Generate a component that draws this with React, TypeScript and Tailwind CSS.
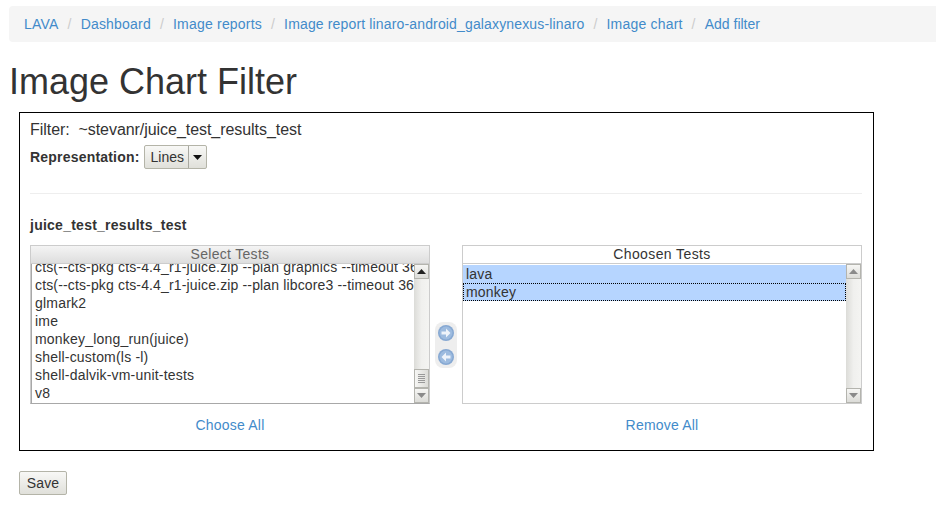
import React from 'react';

const crumbs = [
  { label: 'LAVA', cls: '' },
  { label: 'Dashboard', cls: '' },
  { label: 'Image reports', cls: '' },
  { label: 'Image report linaro-android_galaxynexus-linaro', cls: 'tracking-[0.15px]' },
  { label: 'Image chart', cls: '' },
  { label: 'Add filter', cls: 'tracking-normal' },
];

const available = [
  { label: 'cts(--cts-pkg cts-4.4_r1-juice.zip --plan graphics --timeout 3600)', cls: 'tracking-[0.15px]' },
  { label: 'cts(--cts-pkg cts-4.4_r1-juice.zip --plan libcore3 --timeout 3600)', cls: 'tracking-[0.15px]' },
  { label: 'glmark2', cls: '' },
  { label: 'ime', cls: '' },
  { label: 'monkey_long_run(juice)', cls: '' },
  { label: 'shell-custom(ls -l)', cls: '' },
  { label: 'shell-dalvik-vm-unit-tests', cls: '' },
  { label: 'v8', cls: '' },
];

const ScrollButton = ({ dir, dark }: { dir: 'up' | 'down'; dark?: boolean }) => (
  <div className="w-[15px] h-[15px] shrink-0 flex items-center justify-center bg-gradient-to-b from-[#f6f6f4] to-[#dcdcd8] border border-[#b4b4ae]">
    <svg width="9" height="5" viewBox="0 0 9 5">
      <path d={dir === 'up' ? 'M4.5 0 L9 5 L0 5 Z' : 'M0 0 L9 0 L4.5 5 Z'} fill={dark ? '#222' : '#8a8a8a'} />
    </svg>
  </div>
);

const Track = ({ children }: { children: React.ReactNode }) => (
  <div className="w-[15px] shrink-0 flex flex-col bg-gradient-to-r from-[#dcdcd8] via-[#f0f0ee] to-[#f4f4f2]">
    {children}
  </div>
);

const MoveButton = ({ dir }: { dir: 'left' | 'right' }) => (
  <svg width="16" height="16" viewBox="0 0 16 16" className="block">
    <circle cx="8" cy="8" r="8" fill="#86a8d2" />
    <circle cx="8" cy="8" r="6.5" fill="#9dbbdf" />
    <path
      d={dir === 'right' ? 'M3.5 6.5 H8 V3.5 L12.5 8 L8 12.5 V9.5 H3.5 Z' : 'M12.5 6.5 H8 V3.5 L3.5 8 L8 12.5 V9.5 H12.5 Z'}
      fill="#eef3fa"
    />
  </svg>
);

export default function App() {
  return (
    <div className="w-[936px] h-[514px] overflow-hidden bg-white text-[#333] text-[14px] leading-[20px] tracking-[0.2px] font-['Liberation_Sans',Arial,sans-serif]">
      {/* Breadcrumb */}
      <div className="pl-[9px] pt-[6px]">
        <ul className="h-[36px] flex items-center pl-[15px] bg-[#f5f5f5] rounded-l-[4px] whitespace-nowrap">
          {crumbs.map((c, i) => (
            <li key={c.label} className="flex">
              {i > 0 && <span className="text-[#ccc] px-[9px]">/</span>}
              <a className={`text-[#428bca] ${c.cls}`}>{c.label}</a>
            </li>
          ))}
        </ul>
      </div>

      <h1 className="pl-[9px] mt-[20px] text-[36px] leading-[40px] font-normal tracking-normal">Image Chart Filter</h1>

      {/* Filter box */}
      <div className="ml-[19px] mt-[10px] w-[855px] h-[339px] border border-black pl-[10px] pr-[11px]">
        <div className="mt-[7px] whitespace-pre text-[16px] tracking-[-0.05px]">Filter:  ~stevanr/juice_test_results_test</div>
        <div className="mt-[5px] flex items-center gap-[4px]">
          <span className="font-bold">Representation:</span>
          <div className="h-[24px] flex items-center border border-[#b4b4a8] rounded-[2px] bg-gradient-to-b from-[#f8f8f6] to-[#e0e0da]">
            <span className="pl-[6px] pr-[4px] tracking-normal">Lines</span>
            <span className="h-[22px] w-[18px] border-l border-[#a8a8a0] flex items-center justify-center">
              <svg width="9" height="5" viewBox="0 0 9 5">
                <path d="M0 0 L9 0 L4.5 5 Z" fill="#111" />
              </svg>
            </span>
          </div>
        </div>

        <div className="mt-[24px] border-t border-[#eee]" />
        <h4 className="mt-[21px] font-bold tracking-[0.25px]">juice_test_results_test</h4>

        <div className="mt-[10px] flex items-stretch">
          {/* Available */}
          <div className="w-[400px]">
            <div className="h-[159px] flex flex-col border border-[#ccc] border-b-[#a8a8a8]">
              <div className="h-[18px] shrink-0 text-center leading-[17px] tracking-[0.3px] text-[#666] bg-gradient-to-b from-[#f4f4f4] to-[#dedede] border-b border-[#ccc]">
                Select Tests
              </div>
              <div className="flex-1 min-h-0 flex border-l border-[#a8a8a8]">
                <div className="flex-1 min-w-0 overflow-hidden pl-[3px] pt-[3px] whitespace-nowrap">
                  <div className="-mt-[9px]">
                    {available.map((t) => (
                      <div key={t.label} className={`h-[18px] leading-[18px] ${t.cls}`}>{t.label}</div>
                    ))}
                  </div>
                </div>
                <Track>
                  <ScrollButton dir="up" dark />
                  <div className="flex-1" />
                  <div className="h-[19px] shrink-0 flex flex-col items-center justify-center gap-[1px] bg-gradient-to-r from-[#f6f6f4] to-[#dcdcd8] border border-[#b4b4ae]">
                    {[0, 1, 2, 3, 4].map((n) => (
                      <div key={n} className="w-[7px] h-px bg-[#999]" />
                    ))}
                  </div>
                  <ScrollButton dir="down" />
                </Track>
              </div>
            </div>
            <div className="mt-[11px] text-center text-[#428bca]">Choose All</div>
          </div>

          {/* Move buttons */}
          <div className="w-[32px] h-[159px] flex justify-center">
            <div className="self-start mt-[77px] w-[22px] h-[46px] rounded-[8px] bg-[#eeeeee] flex flex-col items-center justify-center gap-[8px]">
              <MoveButton dir="right" />
              <MoveButton dir="left" />
            </div>
          </div>

          {/* Chosen */}
          <div className="w-[400px]">
            <div className="h-[159px] flex flex-col border border-[#ccc]">
              <div className="h-[18px] shrink-0 text-center leading-[17px] tracking-[0.4px] border-b border-[#ccc]">Choosen Tests</div>
              <div className="flex-1 min-h-0 flex">
                <div className="flex-1 min-w-0 pt-[1px]">
                  <div className="h-[18px] leading-[18px] pl-[3px] bg-[#b6d5ff]">lava</div>
                  <div className="h-[18px] leading-[16px] pl-[2px] bg-[#b6d5ff] border border-dotted border-black">monkey</div>
                </div>
                <Track>
                  <ScrollButton dir="up" />
                  <div className="flex-1" />
                  <ScrollButton dir="down" />
                </Track>
              </div>
            </div>
            <div className="mt-[11px] text-center text-[#428bca]">Remove All</div>
          </div>
        </div>
      </div>

      <button className="block ml-[19px] mt-[20px] w-[48px] h-[24px] border border-[#b4b4a8] rounded-[2px] bg-gradient-to-b from-[#f8f8f6] to-[#e0e0da] text-[#333]">
        Save
      </button>
    </div>
  );
}
